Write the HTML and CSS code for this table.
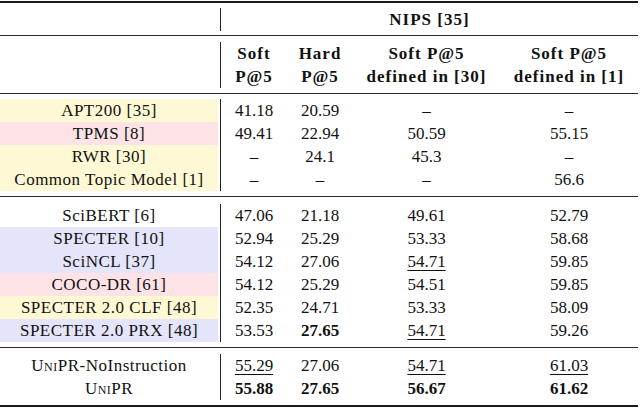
FILE: index.html
```html
<!DOCTYPE html>
<html>
<head>
<meta charset="utf-8">
<link rel="stylesheet" href="styles.css">
</head>
<body>
<table class="results">
  <colgroup>
    <col class="c-name"><col class="c-soft"><col class="c-hard"><col class="c-d30"><col class="c-d1">
  </colgroup>
  <tbody>
    <tr class="rule heavy"><td colspan="5"></td></tr>
    <tr class="sp s5"><td colspan="5"></td></tr>
    <tr class="head">
      <td class="name"></td>
      <td colspan="4" class="hd">NIPS [35]</td>
    </tr>
    <tr class="sp s4"><td colspan="5"></td></tr>
    <tr class="rule"><td colspan="5"></td></tr>
    <tr class="sp s6"><td colspan="5"></td></tr>
    <tr class="head two">
      <td class="name"></td>
      <td class="hd">Soft<br>P@5</td>
      <td class="hd">Hard<br>P@5</td>
      <td class="hd">Soft P@5<br>defined in [30]</td>
      <td class="hd">Soft P@5<br>defined in [1]</td>
    </tr>
    <tr class="sp s5"><td colspan="5"></td></tr>
    <tr class="rule"><td colspan="5"></td></tr>
    <tr class="sp s5"><td colspan="5"></td></tr>

    <tr><td class="name y">APT200 [35]</td><td>41.18</td><td>20.59</td><td>–</td><td>–</td></tr>
    <tr><td class="name p">TPMS [8]</td><td>49.41</td><td>22.94</td><td>50.59</td><td>55.15</td></tr>
    <tr><td class="name y">RWR [30]</td><td>–</td><td>24.1</td><td>45.3</td><td>–</td></tr>
    <tr><td class="name y">Common Topic Model [1]</td><td>–</td><td>–</td><td>–</td><td>56.6</td></tr>

    <tr class="sp s5"><td colspan="5"></td></tr>
    <tr class="rule"><td colspan="5"></td></tr>
    <tr class="sp s7"><td colspan="5"></td></tr>

    <tr><td class="name">SciBERT [6]</td><td>47.06</td><td>21.18</td><td>49.61</td><td>52.79</td></tr>
    <tr><td class="name b">SPECTER [10]</td><td>52.94</td><td>25.29</td><td>53.33</td><td>58.68</td></tr>
    <tr><td class="name b">SciNCL [37]</td><td>54.12</td><td>27.06</td><td><span class="ul">54.71</span></td><td>59.85</td></tr>
    <tr><td class="name p">COCO-DR [61]</td><td>54.12</td><td>25.29</td><td>54.51</td><td>59.85</td></tr>
    <tr><td class="name y">SPECTER 2.0 CLF [48]</td><td>52.35</td><td>24.71</td><td>53.33</td><td>58.09</td></tr>
    <tr><td class="name b">SPECTER 2.0 PRX [48]</td><td>53.53</td><td><b>27.65</b></td><td><span class="ul">54.71</span></td><td>59.26</td></tr>

    <tr class="sp s5"><td colspan="5"></td></tr>
    <tr class="rule"><td colspan="5"></td></tr>
    <tr class="sp s6"><td colspan="5"></td></tr>

    <tr><td class="name"><span class="sc">UniPR</span>-NoInstruction</td><td><span class="ul">55.29</span></td><td>27.06</td><td><span class="ul">54.71</span></td><td><span class="ul">61.03</span></td></tr>
    <tr><td class="name"><span class="sc">UniPR</span></td><td><b>55.88</b></td><td><b>27.65</b></td><td><b>56.67</b></td><td><b>61.62</b></td></tr>

    <tr class="sp s5"><td colspan="5"></td></tr>
    <tr class="rule heavy"><td colspan="5"></td></tr>
  </tbody>
</table>
</body>
</html>
```

FILE: styles.css
```css
html, body {
  margin: 0;
  padding: 0;
  background: #ffffff;
}
body {
  padding-top: 1px;
  font-family: "Liberation Serif", "Tinos", "Times New Roman", "Nimbus Roman", "DejaVu Serif", serif;
  font-size: 17px;
  color: #111111;
}
.results {
  width: 638px;
  table-layout: fixed;
  border-collapse: separate;
  border-spacing: 0;
  font-family: "Liberation Serif", "Tinos", "Times New Roman", "Nimbus Roman", "DejaVu Serif", serif;
}
.results td {
  font-family: "Liberation Serif", "Tinos", "Times New Roman", "Nimbus Roman", "DejaVu Serif", serif;
}
.c-name { width: 221px; }
.c-soft { width: 66px; }
.c-hard { width: 66px; }
.c-d30 { width: 147px; }
.c-d1 { width: 138px; }

.results td {
  padding: 0;
  height: 23px;
  line-height: 23px;
  text-align: center;
  white-space: nowrap;
}
.results td.name {
  padding-right: 2px;
  border-right: 1px solid #222222;
  letter-spacing: 0.5px;
  background-clip: content-box;
}
.name.y { background-color: #fef9d4; }
.name.p { background-color: #fde3e6; }
.name.b { background-color: #e4e4fa; }

.head.two td { height: 46px; }
.hd {
  font-weight: bold;
  letter-spacing: 1px;
}
b { font-weight: bold; }

.sp td {
  height: auto;
  line-height: 0;
  font-size: 0;
}
.s4 td { height: 4px; }
.s5 td { height: 5px; }
.s6 td { height: 6px; }
.s7 td { height: 7px; }

.rule td {
  height: 1px;
  line-height: 0;
  font-size: 0;
  background: #2a2a2a;
}
.rule.heavy td {
  height: 2px;
  background: #1a1a1a;
}

.ul {
  text-decoration: underline;
  text-decoration-thickness: 1px;
  text-underline-offset: 3px;
}
.sc {
  font-variant: small-caps;
}
```
